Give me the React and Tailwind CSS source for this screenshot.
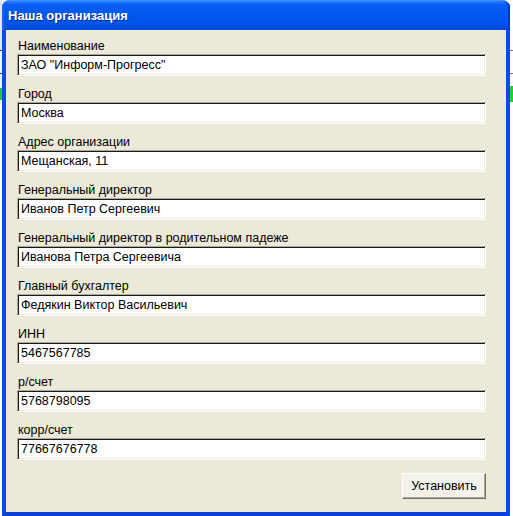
const fields = [
  ['Наименование', 'ЗАО "Информ-Прогресс"'],
  ['Город', 'Москва'],
  ['Адрес организации', 'Мещанская, 11'],
  ['Генеральный директор', 'Иванов Петр Сергеевич'],
  ['Генеральный директор в родительном падеже', 'Иванова Петра Сергеевича'],
  ['Главный бухгалтер', 'Федякин Виктор Васильевич'],
  ['ИНН', '5467567785'],
  ['р/счет', '5768798095'],
  ['корр/счет', '77667676778'],
];

function Field({ label, value }) {
  return (
    <div className="flex flex-col">
      <div className="h-[14px] pl-[1px] text-[12.5px] leading-[14px] text-black">{label}</div>
      <div className="mt-[1px] flex h-[22px] w-[469px] items-center border border-t-[#aca899] border-l-[#aca899] border-b-white border-r-white bg-white pl-[3px] text-[12.5px] text-black shadow-[inset_1px_1px_0_#1a1a1a,inset_-1px_-1px_0_#f1efe2]">
        {value}
      </div>
    </div>
  );
}

export default function App() {
  return (
    <div className="flex h-[516px] w-[513px] bg-white font-['Liberation_Sans',Arial,sans-serif]">
      <div className="flex w-[2px] flex-col">
        <div className="h-[50px] bg-[#dbe6fb]" />
        <div className="h-[1px] bg-[#333]" />
        <div className="h-[22px] bg-[#eef3fd]" />
        <div className="h-[1px] bg-[#333]" />
        <div className="h-[14px] bg-[#eef3fd]" />
        <div className="h-[12px] bg-[#22c838]" />
      </div>

      <div className="flex h-[516px] w-[508px] flex-col">
        <div className="flex h-[30px] items-center rounded-t-[7px] border-t border-[#3d90ff] bg-[linear-gradient(to_bottom,#2f82ff_0%,#0a5ef5_12%,#0058f0_50%,#0053e8_80%,#0048d8_100%)] pl-[6px] pr-[6px] shadow-[inset_-2px_0_0_#0238c0,inset_2px_0_0_#1a64f0]">
          <span className="text-[13px] font-bold text-white [text-shadow:1px_1px_0_#0a2a8a]">Наша организация</span>
        </div>
        <div className="flex flex-1 flex-col border-x-4 border-b-4 border-x-[#0b4ae5] border-b-[#0a40d8] bg-[#ece9d8] pl-[11px] pr-[16px] pt-[9px]">
          <div className="flex flex-col gap-[11px]">
            {fields.map(([label, value]) => (
              <Field key={label} label={label} value={value} />
            ))}
          </div>
          <div className="mt-[13px] flex w-[469px] justify-end">
            <button className="h-[26px] w-[84px] border border-t-white border-l-white border-b-[#716f64] border-r-[#716f64] bg-[#f2f1ea] text-[12.5px] text-black shadow-[inset_-1px_-1px_0_#aca899]">
              Установить
            </button>
          </div>
        </div>
      </div>

      <div className="flex w-[3px] flex-col">
        <div className="h-[50px] bg-white" />
        <div className="h-[1px] bg-[#777]" />
        <div className="h-[22px] bg-white" />
        <div className="h-[1px] bg-[#777]" />
        <div className="h-[12px] bg-white" />
        <div className="h-[16px] bg-[#22d030]" />
      </div>
    </div>
  );
}
